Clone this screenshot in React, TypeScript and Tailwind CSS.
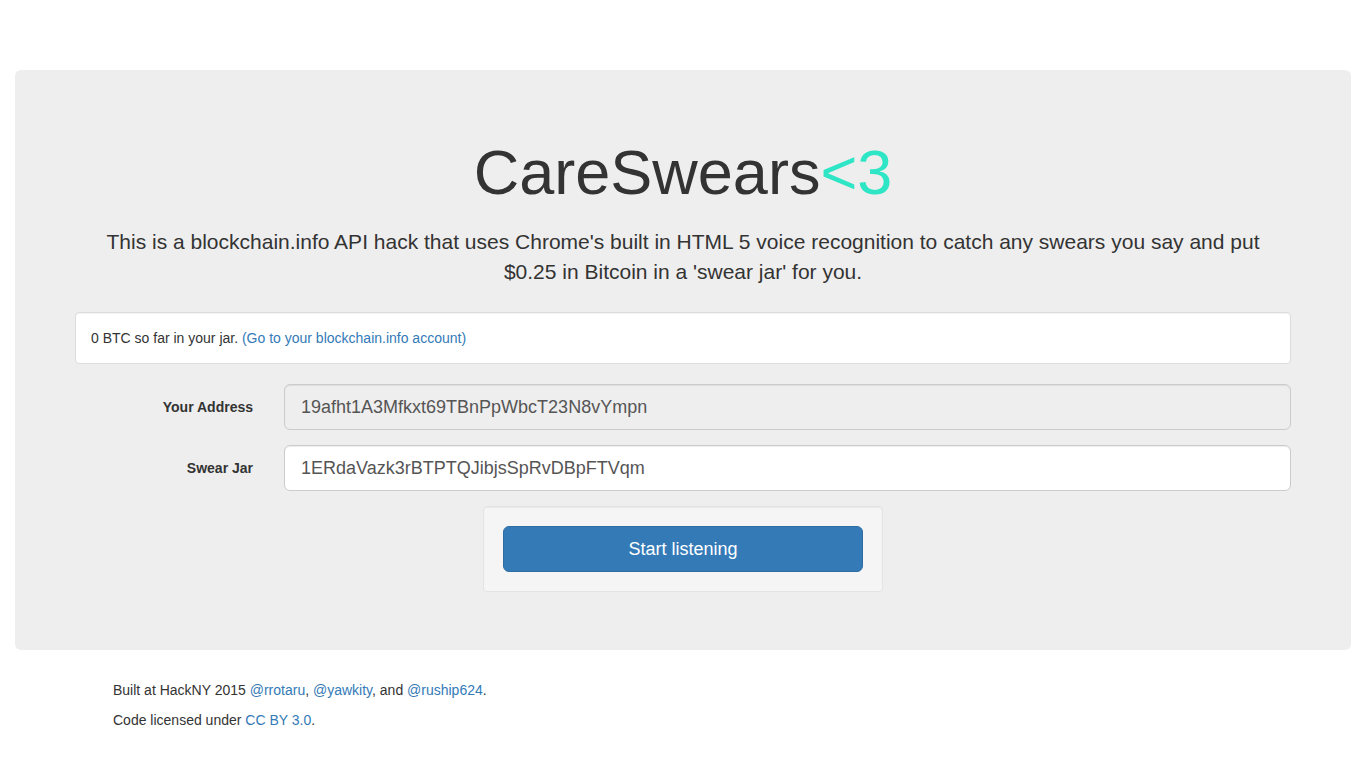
export default function App() {
  return (
    <div className="min-h-screen bg-white pt-[70px] font-['Liberation_Sans',Arial,sans-serif] text-[14px] leading-[20px] text-[#333]">
      <div className="mx-[15px] rounded-[6px] bg-[#eee] px-[60px] pb-[58px] pt-[48px]">
        <h1 className="mt-[20px] text-center text-[63px] leading-[1.1] font-normal">
          CareSwears<span className="text-[#2ee6c5]">&lt;3</span>
        </h1>
        <p className="mx-auto mt-[20px] max-w-[1170px] text-center text-[21px] leading-[29.4px]">
          This is a blockchain.info API hack that uses Chrome's built in HTML 5 voice recognition to catch any swears you say and put
          $0.25 in Bitcoin in a 'swear jar' for you.
        </p>

        <div className="mt-[26px] rounded-[4px] border border-[#dcdcdc] bg-white p-[15px] shadow-[inset_0_1px_1px_rgba(0,0,0,0.05)]">
          0 BTC so far in your jar.{" "}
          <a href="#" className="text-[#337ab7]">
            (Go to your blockchain.info account)
          </a>
        </div>

        <form className="mt-[20px] flex flex-col gap-[15px]">
          <div className="flex items-center">
            <label className="w-[178px] shrink-0 text-right font-bold">Your Address</label>
            <input
              disabled
              value="19afht1A3Mfkxt69TBnPpWbcT23N8vYmpn"
              readOnly
              className="ml-[31px] h-[46px] flex-1 rounded-[6px] border border-[#ccc] bg-[#eee] px-[16px] text-[18px] text-[#555] shadow-[inset_0_1px_1px_rgba(0,0,0,0.075)]"
            />
          </div>
          <div className="flex items-center">
            <label className="w-[178px] shrink-0 text-right font-bold">Swear Jar</label>
            <input
              value="1ERdaVazk3rBTPTQJibjsSpRvDBpFTVqm"
              readOnly
              className="ml-[31px] h-[46px] flex-1 rounded-[6px] border border-[#ccc] bg-white px-[16px] text-[18px] text-[#555] shadow-[inset_0_1px_1px_rgba(0,0,0,0.075)]"
            />
          </div>
        </form>

        <div className="mx-auto mt-[15px] w-[400px] rounded-[4px] border border-[#e3e3e3] bg-[#f5f5f5] px-[19px] py-[19px] shadow-[inset_0_1px_1px_rgba(0,0,0,0.05)]">
          <button className="h-[46px] w-full rounded-[6px] border border-[#2e6da4] bg-[#337ab7] text-[18px] text-white">
            Start listening
          </button>
        </div>
      </div>

      <footer className="mx-auto mt-[30px] w-[1170px] px-[15px]">
        <p className="mb-[10px]">
          Built at HackNY 2015{" "}
          <a href="#" className="text-[#337ab7]">@rrotaru</a>,{" "}
          <a href="#" className="text-[#337ab7]">@yawkity</a>, and{" "}
          <a href="#" className="text-[#337ab7]">@ruship624</a>.
        </p>
        <p>
          Code licensed under{" "}
          <a href="#" className="text-[#337ab7]">CC BY 3.0</a>.
        </p>
      </footer>
    </div>
  );
}
